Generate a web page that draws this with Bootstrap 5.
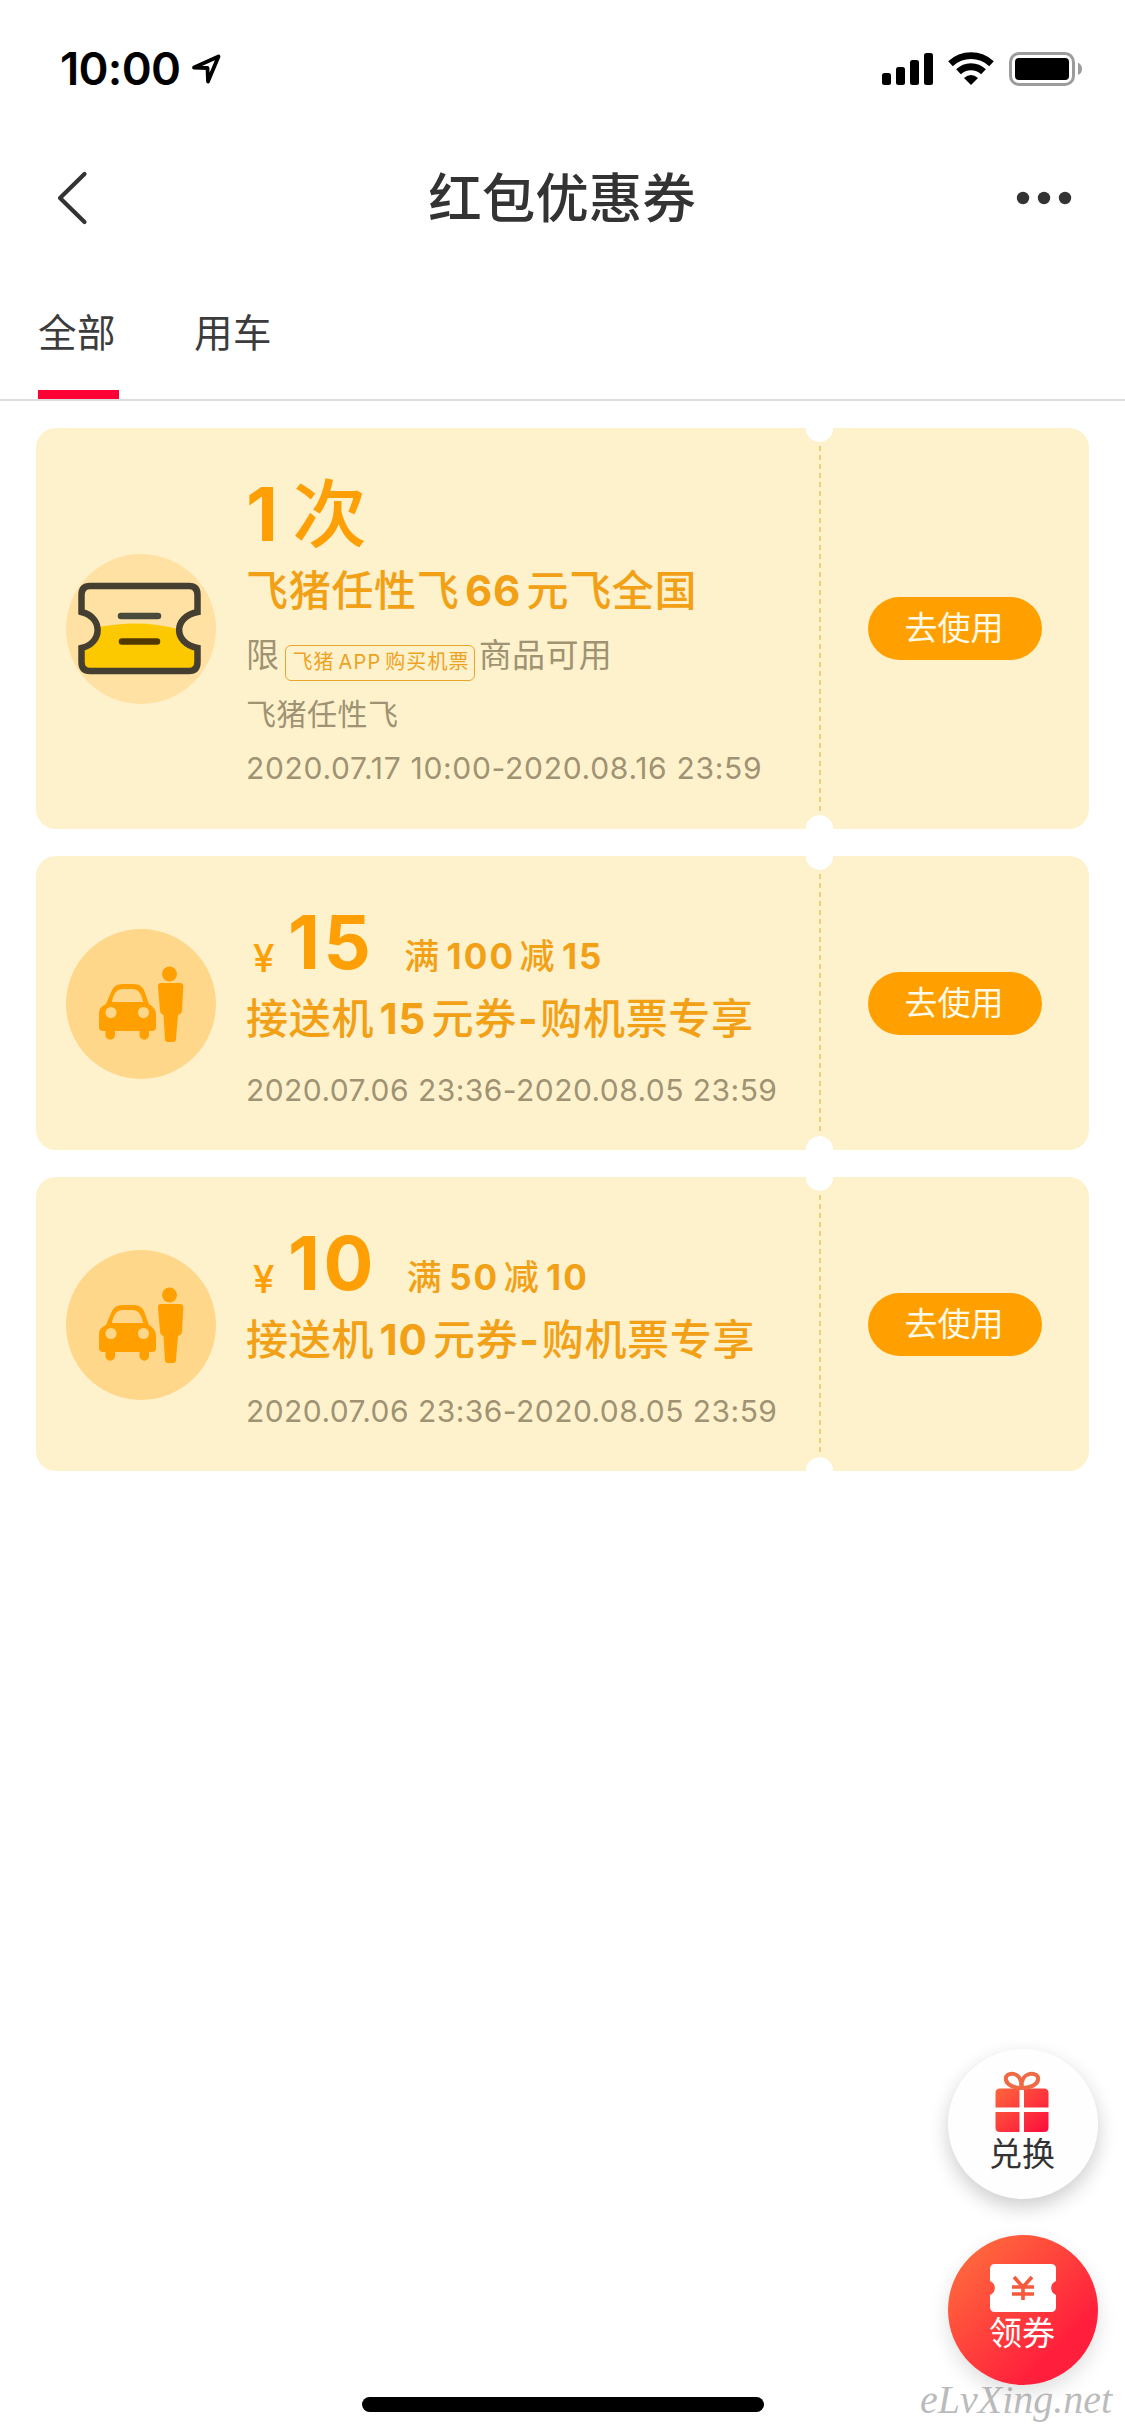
<!DOCTYPE html>
<html lang="zh-CN">
<head>
<meta charset="utf-8">
<meta name="viewport" content="width=device-width, initial-scale=1">
<title>红包优惠券</title>
<link rel="stylesheet" href="https://cdn.jsdelivr.net/npm/bootstrap@5.3.0/dist/css/bootstrap.min.css">
<style>
body{font-family:Inter,"Noto Sans CJK SC",sans-serif;color:#333;background:#fff;height:2436px;overflow:hidden}
svg{display:block;flex:none}
.statusbar{height:132px;padding:0 42px 0 60px}
.clock{font-size:45.5px;font-weight:600;color:#000;line-height:138px;letter-spacing:-.7px}
.titlebar{height:132px;padding:0 53px 0 56px}
.titlebar h1{font-size:53.5px;font-weight:500;line-height:132px;padding:1px 4px 0 0}
.tabs{height:137px;padding-left:38px;gap:75px;border-bottom:2px solid #ddd}
.tabs a{width:81px;font-size:38.5px;line-height:113px;color:#3c3c3c;letter-spacing:.6px;border-bottom:9px solid transparent;white-space:nowrap}
.tabs a.active{border-color:#ff0036}
.coupons{padding:0 36px;margin-top:27px;gap:27px}
.coupon{border-radius:20px;height:294px;background:radial-gradient(circle 14px at 783.5px 0,#fff 13.5px,transparent 14px),radial-gradient(circle 14px at 783.5px 100%,#fff 13.5px,transparent 14px),#fef2cd}
.coupon.tall{height:401px}
.disc{width:150px;height:150px;margin:1px 30px 0 30px;background:#ffd78a}
.tall .disc{background:#ffe1a3}
.info{width:573px;padding-top:44px;color:#f7a00e;white-space:nowrap;align-self:flex-start}
.amt{font-size:74px;font-weight:700;line-height:84px;letter-spacing:3.500px;color:#fd9f05}
.amt .ci{font-weight:500;font-size:74px;margin-left:11px}
.yen{display:inline-block;font-size:38.5px;font-weight:500;line-height:1;vertical-align:-3px;width:42px;padding-left:7px}
.rule{font-size:35px;font-weight:500;line-height:1;margin-left:30px;letter-spacing:.3px;color:#f2a015}
.rule b{font-size:35px;margin:0 4.5px 0 7px;letter-spacing:2.1px}
.name{font-size:42px;font-weight:500;line-height:70px;letter-spacing:.7px;color:#f2a015}
.short .name{line-height:69px}
.name b{margin:0 5.5px}
.name b.dash{margin:0 2px 0 1px}
.cond{font-size:33px;line-height:58px;letter-spacing:.4px}
.gray{color:#9f9373}
.limit{display:inline-block;font-size:20px;line-height:33px;border:1.5px solid #eaa52b;border-radius:6px;padding:0 4px 0 6px;height:36px;margin:0 4px 0 6px;vertical-align:-2px;letter-spacing:1.1px;color:#eda31f}
.sub{font-size:30px;line-height:61px;letter-spacing:.5px}
.date{font-size:30px;line-height:47px;letter-spacing:.7px}
.short .date{line-height:74px;letter-spacing:.45px}
.perf{width:2px;margin:18px 0;background:repeating-linear-gradient(#ecd07c 0 5px,transparent 5px 9px)}
.use{width:174px;height:63px;margin-left:47px;background:#ffa000;color:#fffbe8;font-size:33px;line-height:61px;padding:0 2px 0 0;border:0}
.fabs{position:absolute;left:948px;top:2049px;gap:36px}
.fab{width:150px;height:150px;font-size:33px;line-height:43px}
.fab span{margin-left:-2px}
.fab.light{background:#fefefe;box-shadow:0 8px 20px rgba(0,0,0,.2);color:#333}
.fab.hot{background:linear-gradient(135deg,#ff6a3c 10%,#ff1f3c 75%);box-shadow:0 8px 20px rgba(0,0,0,.13);color:#fff}
.watermark{position:absolute;left:920px;top:2378px;font:italic 40px/44px "Liberation Serif",serif;color:rgba(119,119,119,.5);white-space:nowrap}
.homebar{position:absolute;left:362px;top:2397px;width:402px;height:15px;background:#000}
</style>
</head>
<body class="position-relative">
<svg width="0" height="0" class="position-absolute">
<symbol id="ride" viewBox="0 0 150 150">
<g fill="#ffa000">
<path fill-rule="evenodd" d="M40 75 L46 61 Q49 55 56 55 H68 Q75 55 78 61 L83 75 Q90 79 90 86 V98 Q90 102 86 102 H83 V106 A4.500 4.500 0 0 1 73.500 106 V102 H49 V106 A4.500 4.500 0 0 1 39.500 106 V102 H37 Q33 102 33 98 V84 Q33 78 40 75Z M46 73 H77 Q75 60 66 60 H57 Q48 60 46 73Z"/>
<circle cx="103.500" cy="45" r="7.500"/>
<path d="M95 54 H114 Q117.500 54 117.300 58 L116 81 Q116 85 112 86 L110 110 Q110 113 107 113 H102 Q99 113 99 110 L97.500 86 Q94 85 94 81 L92 58 Q91.500 54 95 54Z"/>
</g>
<circle cx="45" cy="83.500" r="5.500" fill="#ffd78a"/><circle cx="77.500" cy="83.500" r="5.500" fill="#ffd78a"/>
</symbol>
</svg>

<header class="statusbar d-flex align-items-start">
  <span class="clock">10:00</span>
  <svg width="32" height="32" viewBox="0 0 32 32" style="margin:53px 0 0 11px"><path d="M3 14.500 L27.500 3.500 L17 28.500 L16.500 15 Z" fill="none" stroke="#000" stroke-width="3.800" stroke-linejoin="round"/></svg>
  <svg class="ms-auto" width="52" height="33" viewBox="0 0 52 33" style="margin-top:52px"><rect y="21" width="9" height="12" rx="2.500"/><rect x="14" y="15" width="9" height="18" rx="2.500"/><rect x="28" y="8" width="9" height="25" rx="2.500"/><rect x="42" y="1" width="9" height="32" rx="2.500"/></svg>
  <svg width="46" height="33" viewBox="0 0 46 33" style="margin:52px 0 0 14px"><g fill="none" stroke="#000" stroke-width="6.800"><path d="M2.500 11.800 A30 30 0 0 1 43.500 11.800"/><path d="M10.500 19.800 A18 18 0 0 1 35.500 19.800"/></g><path d="M23 33 L16 26 Q23 20 30 26Z"/></svg>
  <svg width="74" height="34" viewBox="0 0 74 34" style="margin:52px 0 0 15px"><rect x="1.500" y="1.500" width="63" height="31" rx="8.500" fill="none" stroke="#9c9c9c" stroke-width="3"/><rect x="6" y="6" width="54" height="22" rx="4"/><path d="M69 10.500 Q73 12.500 73 17 T69 23Z" fill="#9c9c9c"/></svg>
</header>

<nav class="titlebar d-flex align-items-center justify-content-between">
  <svg width="56" height="60" viewBox="0 0 56 60"><path d="M28.500 6 L4 30 L28.500 54" fill="none" stroke="#333" stroke-width="4.200" stroke-linecap="round" stroke-linejoin="round"/></svg>
  <h1 class="m-0">红包优惠券</h1>
  <svg width="56" height="14" viewBox="0 0 56 14"><g fill="#333"><circle cx="7" cy="7" r="6.200"/><circle cx="28" cy="7" r="6.200"/><circle cx="49" cy="7" r="6.200"/></g></svg>
</nav>

<div class="tabs d-flex align-items-end">
  <a class="active text-decoration-none">全部</a>
  <a class="text-decoration-none">用车</a>
</div>

<main class="coupons d-flex flex-column">
  <section class="coupon tall d-flex align-items-center">
    <div class="disc rounded-circle flex-shrink-0">
      <svg width="150" height="150" viewBox="0 0 150 150">
        <path d="M33 73 Q75 65 112 75 Q116 88 131 94 V108 Q131 117 123 117 H24 Q16 117 16 108 V94 Q34 88 33 73Z" fill="#fcc800"/>
        <path d="M24 32 H123 Q131.500 32 131.500 41 V58 C107 63 107 89 131.500 94 V108 Q131.500 117 123 117 H24 Q15.500 117 15.500 108 V94 C37 89 37 63 15.500 58 V41 Q15.500 32 24 32Z" fill="none" stroke="#453f31" stroke-width="6.500"/>
        <path d="M55 62 H92" stroke="#4a4a3c" stroke-width="6.500" stroke-linecap="round"/><path d="M56 87.500 H91" stroke="#503900" stroke-width="6.500" stroke-linecap="round"/>
      </svg>
    </div>
    <div class="info">
      <div class="amt">1<span class="ci">次</span></div>
      <div class="name">飞猪任性飞<b>66</b>元飞全国</div>
      <div class="cond gray">限<span class="limit">飞猪<span class="mx-1">APP</span>购买机票</span>商品可用</div>
      <div class="sub gray">飞猪任性飞</div>
      <div class="date gray">2020.07.17 10:00-2020.08.16 23:59</div>
    </div>
    <div class="perf align-self-stretch"></div>
    <button class="use btn rounded-pill">去使用</button>
  </section>

  <section class="coupon short d-flex align-items-center">
    <div class="disc rounded-circle flex-shrink-0"><svg width="150" height="150"><use href="#ride"/></svg></div>
    <div class="info">
      <div class="amt"><span class="yen">¥</span>15<span class="rule">满<b>100</b>减<b>15</b></span></div>
      <div class="name">接送机<b>15</b>元券<b class="dash">-</b>购机票专享</div>
      <div class="date gray">2020.07.06 23:36-2020.08.05 23:59</div>
    </div>
    <div class="perf align-self-stretch"></div>
    <button class="use btn rounded-pill">去使用</button>
  </section>

  <section class="coupon short d-flex align-items-center">
    <div class="disc rounded-circle flex-shrink-0"><svg width="150" height="150"><use href="#ride"/></svg></div>
    <div class="info">
      <div class="amt"><span class="yen">¥</span>10<span class="rule">满<b>50</b>减<b>10</b></span></div>
      <div class="name">接送机<b>10</b>元券<b class="dash">-</b>购机票专享</div>
      <div class="date gray">2020.07.06 23:36-2020.08.05 23:59</div>
    </div>
    <div class="perf align-self-stretch"></div>
    <button class="use btn rounded-pill">去使用</button>
  </section>
</main>

<div class="fabs d-flex flex-column">
  <div class="fab light rounded-circle d-flex flex-column align-items-center">
    <svg width="54" height="62" viewBox="0 0 54 62" style="margin:22px 2px 0 0">
      <defs><linearGradient id="gift" gradientUnits="userSpaceOnUse" x1="5" y1="10" x2="50" y2="62"><stop offset="0" stop-color="#ff6a3c"/><stop offset="1" stop-color="#fb0f3c"/></linearGradient></defs>
      <g fill="url(#gift)"><path d="M5 17.500 H24.500 V36.500 H.5 V22 Q.5 17.500 5 17.500Z"/><path d="M29 17.500 H49 Q53.500 17.500 53.500 22 V36.500 H29Z"/><path d="M.5 41 H24.500 V61 H5 Q.5 61 .5 56.500Z"/><path d="M29 41 H53.500 V56.500 Q53.500 61 49 61 H29Z"/></g>
      <g fill="none" stroke="#ee6a45" stroke-width="4"><path d="M26.500 17 C28 -1 9 0 11 9 C12 14 19 17 26.500 17Z"/><path d="M26.500 17 C25 -1 45 0 43 9 C42 14 35 17 26.500 17Z"/></g>
    </svg>
    <span>兑换</span>
  </div>
  <div class="fab hot rounded-circle d-flex flex-column align-items-center">
    <svg width="66" height="48" viewBox="0 0 66 48" style="margin-top:29px">
      <path d="M5 0 H61 Q66 0 66 5 V17 A7.500 7.500 0 0 0 66 31 V43 Q66 48 61 48 H5 Q0 48 0 43 V31 A7.500 7.500 0 0 0 0 17 V5 Q0 0 5 0Z" fill="#fff"/>
      <path d="M24 13 L33 23 L42 13 M22 23 H44 M22 30 H44 M33 23 V36" fill="none" stroke="#f65a3c" stroke-width="3.600"/>
    </svg>
    <span>领券</span>
  </div>
</div>

<div class="watermark">eLvXing.net</div>
<div class="homebar rounded-pill"></div>
<script src="https://cdn.jsdelivr.net/npm/bootstrap@5.3.0/dist/js/bootstrap.bundle.min.js"></script>
</body>
</html>
